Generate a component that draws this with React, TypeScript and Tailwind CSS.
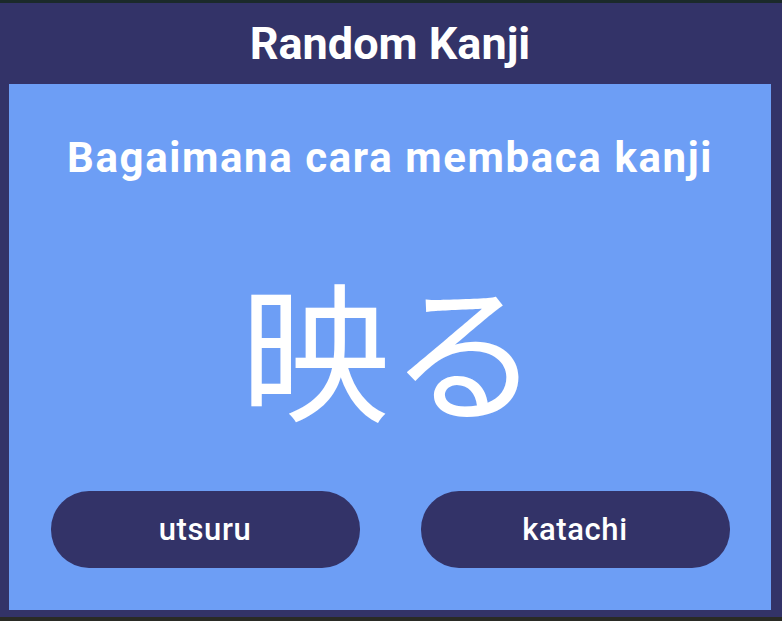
import React from "react"

const choices = ["utsuru", "katachi"]

export default function App() {
  return (
    <div className="flex h-[621px] w-full flex-col bg-[#1b2a2a] pt-[3px] font-['Roboto',sans-serif] text-white">
      {/* Header + frame */}
      <div className="flex flex-1 flex-col bg-[#333368] pb-[7px] pl-[9px] pr-[11px]">
        <header className="flex h-[81px] items-center justify-center">
          <h1 className="text-[45px] font-bold leading-none">Random Kanji</h1>
        </header>

        {/* Quiz card */}
        <main className="flex flex-1 flex-col items-center bg-[#6d9ef5] pt-[53px]">
          <h2 className="text-[42px] font-bold leading-none tracking-[1.6px]">Bagaimana cara membaca kanji</h2>

          <div className="mt-[91px] font-['Noto_Sans_CJK_JP',sans-serif] text-[150px] font-normal leading-none">
            映る
          </div>

          <div className="mt-[71px] flex w-full justify-center gap-[61px]">
            {choices.map((c) => (
              <button
                key={c}
                className="flex h-[77px] w-[309px] items-center justify-center rounded-[38px] bg-[#333368] text-[31px] font-medium leading-none tracking-[0.6px] text-white"
              >
                {c}
              </button>
            ))}
          </div>
        </main>
      </div>
      <div className="h-[4px] bg-[#2a2b25]" />
    </div>
  )
}
